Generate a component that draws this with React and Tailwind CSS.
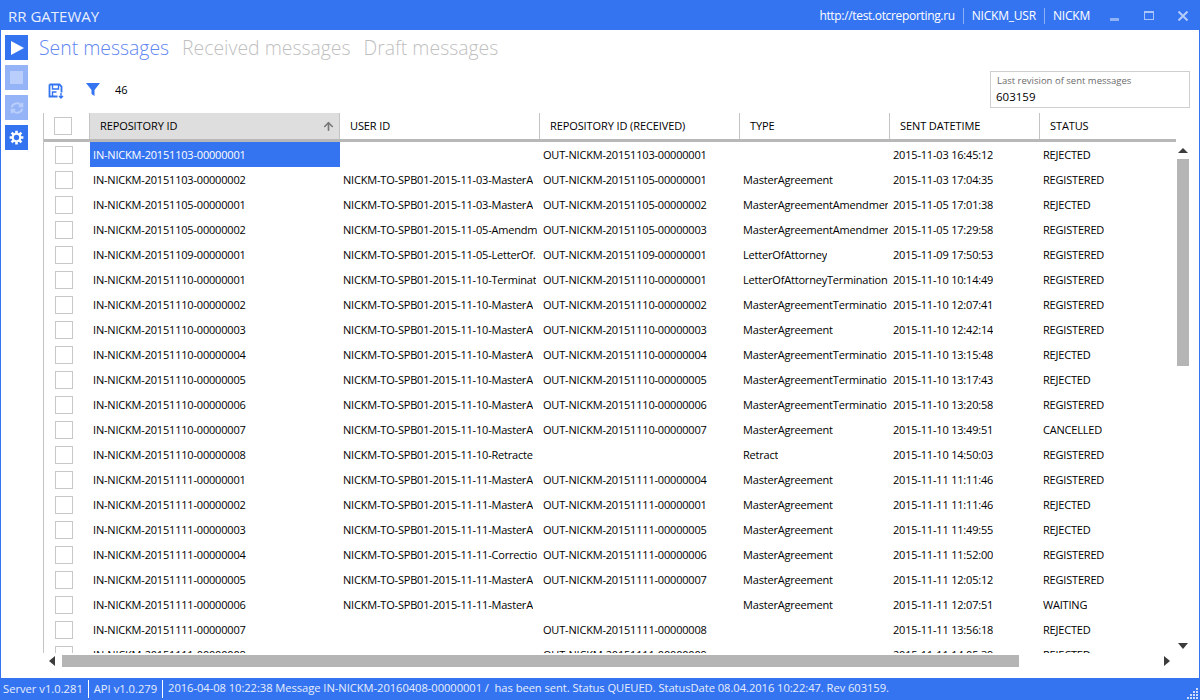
import React from 'react';
import { ArrowUp } from 'lucide-react';

const rows = [
  ['IN-NICKM-20151103-00000001', '', 'OUT-NICKM-20151103-00000001', '', '2015-11-03 16:45:12', 'REJECTED'],
  ['IN-NICKM-20151103-00000002', 'NICKM-TO-SPB01-2015-11-03-MasterA', 'OUT-NICKM-20151105-00000001', 'MasterAgreement', '2015-11-03 17:04:35', 'REGISTERED'],
  ['IN-NICKM-20151105-00000001', 'NICKM-TO-SPB01-2015-11-03-MasterA', 'OUT-NICKM-20151105-00000002', 'MasterAgreementAmendmer', '2015-11-05 17:01:38', 'REJECTED'],
  ['IN-NICKM-20151105-00000002', 'NICKM-TO-SPB01-2015-11-05-Amendm', 'OUT-NICKM-20151105-00000003', 'MasterAgreementAmendmer', '2015-11-05 17:29:58', 'REGISTERED'],
  ['IN-NICKM-20151109-00000001', 'NICKM-TO-SPB01-2015-11-05-LetterOf.', 'OUT-NICKM-20151109-00000001', 'LetterOfAttorney', '2015-11-09 17:50:53', 'REGISTERED'],
  ['IN-NICKM-20151110-00000001', 'NICKM-TO-SPB01-2015-11-10-Terminat', 'OUT-NICKM-20151110-00000001', 'LetterOfAttorneyTermination', '2015-11-10 10:14:49', 'REGISTERED'],
  ['IN-NICKM-20151110-00000002', 'NICKM-TO-SPB01-2015-11-10-MasterA', 'OUT-NICKM-20151110-00000002', 'MasterAgreementTerminatio', '2015-11-10 12:07:41', 'REGISTERED'],
  ['IN-NICKM-20151110-00000003', 'NICKM-TO-SPB01-2015-11-10-MasterA', 'OUT-NICKM-20151110-00000003', 'MasterAgreement', '2015-11-10 12:42:14', 'REGISTERED'],
  ['IN-NICKM-20151110-00000004', 'NICKM-TO-SPB01-2015-11-10-MasterA', 'OUT-NICKM-20151110-00000004', 'MasterAgreementTerminatio', '2015-11-10 13:15:48', 'REJECTED'],
  ['IN-NICKM-20151110-00000005', 'NICKM-TO-SPB01-2015-11-10-MasterA', 'OUT-NICKM-20151110-00000005', 'MasterAgreementTerminatio', '2015-11-10 13:17:43', 'REJECTED'],
  ['IN-NICKM-20151110-00000006', 'NICKM-TO-SPB01-2015-11-10-MasterA', 'OUT-NICKM-20151110-00000006', 'MasterAgreementTerminatio', '2015-11-10 13:20:58', 'REGISTERED'],
  ['IN-NICKM-20151110-00000007', 'NICKM-TO-SPB01-2015-11-10-MasterA', 'OUT-NICKM-20151110-00000007', 'MasterAgreement', '2015-11-10 13:49:51', 'CANCELLED'],
  ['IN-NICKM-20151110-00000008', 'NICKM-TO-SPB01-2015-11-10-Retracte', '', 'Retract', '2015-11-10 14:50:03', 'REGISTERED'],
  ['IN-NICKM-20151111-00000001', 'NICKM-TO-SPB01-2015-11-11-MasterA', 'OUT-NICKM-20151111-00000004', 'MasterAgreement', '2015-11-11 11:11:46', 'REGISTERED'],
  ['IN-NICKM-20151111-00000002', 'NICKM-TO-SPB01-2015-11-11-MasterA', 'OUT-NICKM-20151111-00000001', 'MasterAgreement', '2015-11-11 11:11:46', 'REJECTED'],
  ['IN-NICKM-20151111-00000003', 'NICKM-TO-SPB01-2015-11-11-MasterA', 'OUT-NICKM-20151111-00000005', 'MasterAgreement', '2015-11-11 11:49:55', 'REJECTED'],
  ['IN-NICKM-20151111-00000004', 'NICKM-TO-SPB01-2015-11-11-Correctio', 'OUT-NICKM-20151111-00000006', 'MasterAgreement', '2015-11-11 11:52:00', 'REGISTERED'],
  ['IN-NICKM-20151111-00000005', 'NICKM-TO-SPB01-2015-11-11-MasterA', 'OUT-NICKM-20151111-00000007', 'MasterAgreement', '2015-11-11 12:05:12', 'REGISTERED'],
  ['IN-NICKM-20151111-00000006', 'NICKM-TO-SPB01-2015-11-11-MasterA', '', 'MasterAgreement', '2015-11-11 12:07:51', 'WAITING'],
  ['IN-NICKM-20151111-00000007', '', 'OUT-NICKM-20151111-00000008', '', '2015-11-11 13:56:18', 'REJECTED'],
  ['IN-NICKM-20151111-00000008', '', 'OUT-NICKM-20151111-00000009', '', '2015-11-11 14:05:39', 'REJECTED'],
];

const columns = [
  { title: 'REPOSITORY ID', width: 'w-[250px]' },
  { title: 'USER ID', width: 'w-[200px]' },
  { title: 'REPOSITORY ID (RECEIVED)', width: 'w-[200px]' },
  { title: 'TYPE', width: 'w-[150px]' },
  { title: 'SENT DATETIME', width: 'w-[150px]' },
  { title: 'STATUS', width: 'w-[136px]' },
];

function Tri({ className, points }) {
  return (
    <svg width="12" height="12" viewBox="0 0 12 12" className={className}>
      <polygon points={points} fill="#3c3c3c" />
    </svg>
  );
}

function SideButton({ faded, children }) {
  return (
    <div className={`w-[23px] h-[25px] flex items-center justify-center ${faded ? 'bg-[#94b4f7]' : 'bg-[#3574f0]'}`}>
      {children}
    </div>
  );
}

export default function App() {
  return (
    <div className="w-[1200px] h-[700px] flex flex-col overflow-hidden bg-white border border-[#3574f0] text-[11px] text-black font-['Open_Sans',sans-serif]">
      {/* title bar */}
      <div className="h-[29px] shrink-0 bg-[#3574f0] flex items-center text-white text-xs pl-[7px]">
        <span className="text-[15px] text-[#e6eefd]">RR GATEWAY</span>
        <div className="ml-auto flex items-center">
          <span className="pr-[8px] border-r border-[#8cb0f6] tracking-[-0.33px]">http://test.otcreporting.ru</span>
          <span className="px-[8px] border-r border-[#8cb0f6] tracking-[-0.22px]">NICKM_USR</span>
          <span className="pl-[8px] tracking-[-0.2px]">NICKM</span>
          <div className="w-[9px] h-[3px] ml-[20px] mt-[7px] bg-[#8fb2f7]" />
          <div className="w-[10px] h-[9px] ml-[25px] border border-t-2 border-[#a9c5fa]" />
          <svg width="10" height="10" viewBox="0 0 10 10" className="ml-[24px] mr-[11px]">
            <path d="M0.5 0.5L9.5 9.5M9.5 0.5L0.5 9.5" stroke="#b4ccfa" strokeWidth="2" />
          </svg>
        </div>
      </div>

      <div className="flex-1 min-h-0 flex">
        {/* side buttons */}
        <div className="w-[38px] shrink-0 pl-[4px] pt-[5px] flex flex-col gap-[5px]">
          <SideButton>
            <svg width="16" height="16" viewBox="0 0 16 16"><polygon points="2,1 15,8 2,15" fill="#fff" /></svg>
          </SideButton>
          <SideButton faded>
            <div className="w-[13px] h-[13px] bg-[#b9cefa]" />
          </SideButton>
          <SideButton faded>
            <svg width="14" height="14" viewBox="0 0 24 24" fill="none" stroke="#b9cefa" strokeWidth="3.5">
              <path d="M3 11a9 8 0 0 1 16-4l2 2M21 13a9 8 0 0 1-16 4l-2-2" />
              <path d="M21 3v6h-6M3 21v-6h6" />
            </svg>
          </SideButton>
          <SideButton>
            <svg width="15" height="15" viewBox="0 0 24 24" fill="none" stroke="#fff">
              <circle cx="12" cy="12" r="6" strokeWidth="3.4" />
              <path d="M12 1v5M12 18v5M1 12h5M18 12h5M4.2 4.2l3.5 3.5M16.3 16.3l3.5 3.5M19.8 4.2l-3.5 3.5M7.7 16.3l-3.5 3.5" strokeWidth="4.2" />
            </svg>
          </SideButton>
        </div>

        <div className="flex-1 min-w-0 flex flex-col">
          {/* tabs */}
          <div className="h-[36px] shrink-0 flex items-center gap-[13px] text-[19.4px] font-light text-[#bfbfbf]">
            <span className="text-[#5f86f2]">Sent messages</span>
            <span>Received messages</span>
            <span>Draft messages</span>
          </div>

          {/* toolbar */}
          <div className="h-[47px] shrink-0 flex items-center">
            <svg width="16" height="16" viewBox="0 0 16 16" fill="none" stroke="#3574f0" className="ml-[9px] mt-[2px]">
              <path d="M1.5 1.5h10l2 2v6M1.5 1.5v12h8" strokeWidth="1.8" />
              <path d="M4.5 2v4h6V2M4.5 13V9h4" strokeWidth="1.4" />
              <path d="M13 10v5M11 13l2 2 2-2" strokeWidth="1.4" />
            </svg>
            <svg width="14" height="15" viewBox="0 0 14 15" className="ml-[22px] mt-[-1px]">
              <polygon points="0,1 14,1 8.5,8 8.5,14 5.5,12 5.5,8" fill="#3574f0" />
            </svg>
            <span className="ml-[15px] mt-[1px]">46</span>
            <div className="ml-auto mr-[9px] mt-[-1px] w-[200px] h-[37px] border border-[#cfcfcf] px-[5px] flex flex-col">
              <span className="text-[9.5px] text-[#6b6b6b] leading-[13px] mt-[2px] pl-[1px]">Last revision of sent messages</span>
              <span className="text-[11.5px] leading-[17px] mt-[1px]">603159</span>
            </div>
          </div>

          {/* grid and scrollbars */}
          <div className="flex-1 min-h-0 flex pl-[4px]">
            <div className="w-[1133px] shrink-0 flex flex-col">
              <div className="flex-1 min-h-0 overflow-hidden border-l border-[#c4c4c4]">
                <div className="flex h-[29px] border-b-[3px] border-[#b8b8b8] font-medium tracking-[-0.1px]">
                  <div className="w-[45px] shrink-0 flex items-center pl-[10px]">
                    <div className="w-[18px] h-[18px] border border-[#c8c8c8]" />
                  </div>
                  {columns.map((col, i) => (
                    <div key={col.title} className={`${col.width} shrink-0 flex items-center pl-[10px] border-l border-[#c4c4c4] ${i === 0 ? 'bg-[#dedede]' : ''}`}>
                      {col.title}
                      {i === 0 && <ArrowUp size={13} strokeWidth={3} className="ml-auto mr-[4px] text-[#777777]" />}
                    </div>
                  ))}
                </div>
                {rows.map((row, r) => (
                  <div key={row[0]} className="flex h-[25px] items-center tracking-[-0.19px]">
                    <div className="w-[46px] shrink-0 flex items-center pl-[11px]">
                      <div className="w-[18px] h-[18px] border border-[#c8c8c8]" />
                    </div>
                    {row.map((cell, c) => (
                      <div key={c} className={`${columns[c].width} shrink-0 h-full flex items-center pl-[3px] pr-[2px] pt-[1px] ${c === 0 && r === 0 ? 'bg-[#3574f0] text-white' : ''}`}>
                        <span className="block overflow-hidden whitespace-nowrap">{cell}</span>
                      </div>
                    ))}
                  </div>
                ))}
              </div>
              <div className="h-[16px] shrink-0 flex items-center">
                <Tri points="8,1 8,11 2,6" className="ml-[4px]" />
                <div className="ml-[3px] w-[957px] h-[12px] bg-[#b5b5b5]" />
                <Tri points="2,1 2,11 8,6" className="ml-[143px]" />
              </div>
            </div>
            <div className="w-[12px] ml-[1px] flex flex-col items-center pt-[31px]">
              <Tri points="1,9 11,9 6,4" />
              <div className="mt-[3px] w-[12px] h-[207px] bg-[#b5b5b5]" />
              <Tri points="1,3 11,3 6,9" className="mt-[274px]" />
            </div>
          </div>
          <div className="h-[9px] shrink-0" />
        </div>
      </div>

      {/* status bar */}
      <div className="h-[21px] shrink-0 bg-[#3574f0] text-[#e6eefd] text-[11.2px] flex items-center pl-[2px] relative">
        <span className="pr-[5px] leading-[18px] border-r border-white">Server v1.0.281</span>
        <span className="px-[5px] leading-[18px] border-r border-white">API v1.0.279</span>
        <span className="pl-[5px] whitespace-pre tracking-[-0.06px]">2016-04-08 10:22:38 Message IN-NICKM-20160408-00000001 /  has been sent. Status QUEUED. StatusDate 08.04.2016 10:22:47. Rev 603159.</span>
        <svg width="12" height="12" viewBox="0 0 12 12" className="absolute right-0 bottom-0">
          {[[9, 1], [6, 4], [9, 4], [3, 7], [6, 7], [9, 7], [0, 10], [3, 10], [6, 10], [9, 10]].map(([x, y]) => (
            <rect key={`${x}-${y}`} x={x} y={y} width="2" height="2" fill="#cfdcf9" />
          ))}
        </svg>
      </div>
    </div>
  );
}
